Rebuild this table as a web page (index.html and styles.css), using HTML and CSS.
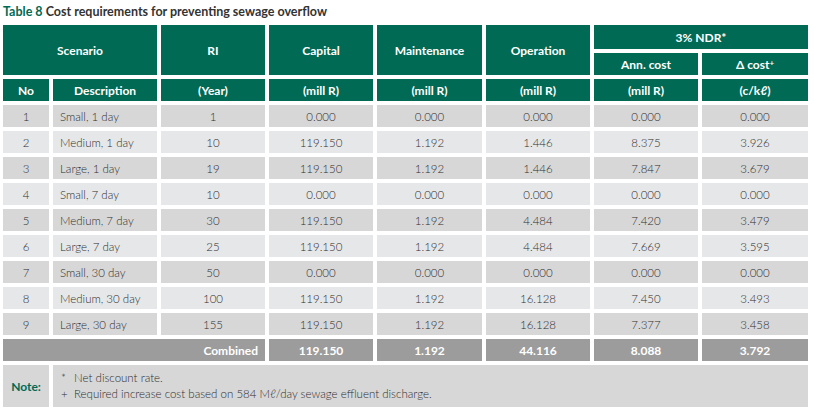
FILE: index.html
```html
<!DOCTYPE html>
<html>
<head>
<meta charset="utf-8">
<link rel="stylesheet" href="styles.css">
</head>
<body>
<div class="page">
  <div class="title"><span class="tnum">Table 8</span> Cost requirements for preventing sewage overflow</div>
  <div class="grid">
    <div class="h c-scen">Scenario</div>
    <div class="h c-ri">RI</div>
    <div class="h c-cap">Capital</div>
    <div class="h c-mai">Maintenance</div>
    <div class="h c-op">Operation</div>
    <div class="h c-ndr">3% NDR*</div>
    <div class="h c-ann">Ann. cost</div>
    <div class="h c-del">Δ cost<sup>+</sup></div>

    <div class="h">No</div>
    <div class="h">Description</div>
    <div class="h">(Year)</div>
    <div class="h">(mill R)</div>
    <div class="h">(mill R)</div>
    <div class="h">(mill R)</div>
    <div class="h">(mill R)</div>
    <div class="h">(c/kℓ)</div>

    <div class="d o">1</div><div class="d o l">Small, 1 day</div><div class="d o">1</div><div class="d o">0.000</div><div class="d o">0.000</div><div class="d o">0.000</div><div class="d o">0.000</div><div class="d o">0.000</div>
    <div class="d e">2</div><div class="d e l">Medium, 1 day</div><div class="d e">10</div><div class="d e">119.150</div><div class="d e">1.192</div><div class="d e">1.446</div><div class="d e">8.375</div><div class="d e">3.926</div>
    <div class="d o">3</div><div class="d o l">Large, 1 day</div><div class="d o">19</div><div class="d o">119.150</div><div class="d o">1.192</div><div class="d o">1.446</div><div class="d o">7.847</div><div class="d o">3.679</div>
    <div class="d e">4</div><div class="d e l">Small, 7 day</div><div class="d e">10</div><div class="d e">0.000</div><div class="d e">0.000</div><div class="d e">0.000</div><div class="d e">0.000</div><div class="d e">0.000</div>
    <div class="d o">5</div><div class="d o l">Medium, 7 day</div><div class="d o">30</div><div class="d o">119.150</div><div class="d o">1.192</div><div class="d o">4.484</div><div class="d o">7.420</div><div class="d o">3.479</div>
    <div class="d e">6</div><div class="d e l">Large, 7 day</div><div class="d e">25</div><div class="d e">119.150</div><div class="d e">1.192</div><div class="d e">4.484</div><div class="d e">7.669</div><div class="d e">3.595</div>
    <div class="d o">7</div><div class="d o l">Small, 30 day</div><div class="d o">50</div><div class="d o">0.000</div><div class="d o">0.000</div><div class="d o">0.000</div><div class="d o">0.000</div><div class="d o">0.000</div>
    <div class="d e">8</div><div class="d e l">Medium, 30 day</div><div class="d e">100</div><div class="d e">119.150</div><div class="d e">1.192</div><div class="d e">16.128</div><div class="d e">7.450</div><div class="d e">3.493</div>
    <div class="d o">9</div><div class="d o l">Large, 30 day</div><div class="d o">155</div><div class="d o">119.150</div><div class="d o">1.192</div><div class="d o">16.128</div><div class="d o">7.377</div><div class="d o">3.458</div>

    <div class="t c-comb">Combined</div><div class="t">119.150</div><div class="t">1.192</div><div class="t">44.116</div><div class="t">8.088</div><div class="t">3.792</div>

    <div class="note-label">Note:</div>
    <div class="note-body">
      <div class="note-line"><span class="mark">*</span><span>Net discount rate.</span></div>
      <div class="note-line"><span class="mark">+</span><span>Required increase cost based on 584 Mℓ/day sewage effluent discharge.</span></div>
    </div>
  </div>
</div>
</body>
</html>
```
FILE: styles.css
```css
html, body {
  margin: 0;
  padding: 0;
  background: #ffffff;
}
.page {
  padding: 0 3px;
  font-family: "Lato", "Liberation Sans", sans-serif;
}
.title {
  height: 25px;
  line-height: 23px;
  font-size: 12.5px;
  font-weight: 700;
  color: #333333;
}
.tnum {
  color: #006a55;
}
.grid {
  display: grid;
  grid-template-columns: 46px 104px 104px 104px 105px 104px 104px 106px;
  grid-template-rows: 24px 22px 22px 22px 22px 22px 22px 22px 22px 22px 22px 22px 22px 42px;
  gap: 4px;
}
.h {
  background: #006a55;
  color: #ffffff;
  font-weight: 700;
  font-size: 12px;
  display: flex;
  align-items: center;
  justify-content: center;
}
.h sup {
  font-size: 8px;
  line-height: 0;
  position: relative;
  top: -1px;
}
.c-scen { grid-column: 1 / 3; grid-row: 1 / 3; }
.c-ri { grid-column: 3; grid-row: 1 / 3; }
.c-cap { grid-column: 4; grid-row: 1 / 3; }
.c-mai { grid-column: 5; grid-row: 1 / 3; }
.c-op { grid-column: 6; grid-row: 1 / 3; }
.c-ndr { grid-column: 7 / 9; grid-row: 1; }
.c-ann { grid-column: 7; grid-row: 2; }
.c-del { grid-column: 8; grid-row: 2; }
.d {
  font-size: 11.5px;
  font-weight: 300;
  color: #2e2e2e;
  display: flex;
  align-items: center;
  justify-content: center;
}
.d.l {
  justify-content: flex-start;
  padding-left: 7px;
}
.o { background: #d7d7d8; }
.e { background: #e6e7e8; }
.t {
  background: #9c9c9c;
  color: #ffffff;
  font-weight: 700;
  font-size: 12px;
  display: flex;
  align-items: center;
  justify-content: center;
}
.c-comb {
  grid-column: 1 / 4;
  justify-content: flex-end;
  padding-right: 7px;
}
.note-label {
  background: #d7d7d8;
  color: #006a55;
  font-weight: 700;
  font-size: 12px;
  display: flex;
  align-items: center;
  justify-content: center;
}
.note-body {
  grid-column: 2 / 9;
  background: #d7d7d8;
  font-size: 11.5px;
  font-weight: 300;
  color: #2e2e2e;
  display: flex;
  flex-direction: column;
  justify-content: center;
  padding-left: 8px;
}
.note-line {
  display: flex;
  line-height: 16px;
}
.mark {
  width: 13px;
}
```
